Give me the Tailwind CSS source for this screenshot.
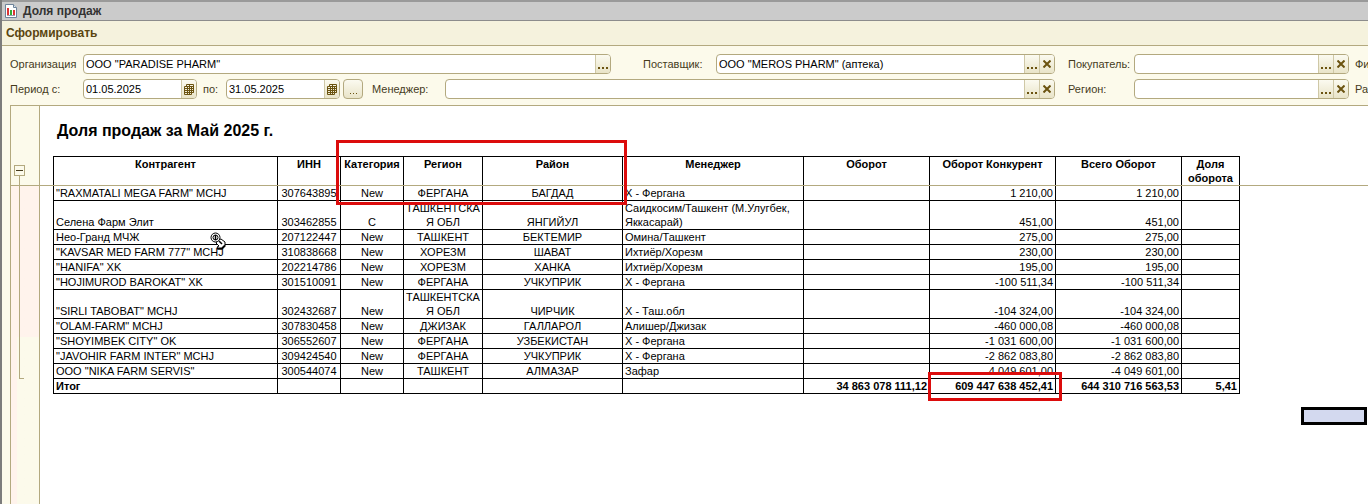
<!DOCTYPE html>
<html lang="ru">
<head>
<meta charset="utf-8">
<title>Доля продаж</title>
<script src="https://cdn.jsdelivr.net/npm/@tailwindcss/browser@4"></script>
</head>
<body class="h-screen overflow-hidden bg-[#fcfaeb] font-['Liberation_Sans',Arial,sans-serif] text-[11px] text-black">
<div class="flex h-full flex-col border-l-2 border-[#7c7c7c]">
  <header class="flex h-[21px] shrink-0 items-center gap-[6px] border-t-2 border-b border-t-[#9a9a9a] border-b-[#8c8c8c] bg-[#cbcbcb] pl-[3px]">
    <svg class="h-[14px] w-[12px]" viewBox="0 0 12 14"><path d="M.5.5h8l3 3v10H.5z" fill="#fff" stroke="#6d8299"/><path d="M8.500 .5v3h3" fill="#dce6ee" stroke="#6d8299"/><path d="M2 4h2v7H2z" fill="#d33"/><path d="M5 6h2v5H5z" fill="#3a3"/><path d="M8 6h2v5H8z" fill="#d33"/><path d="M2 11.500h8" stroke="#99a"/></svg>
    <h1 class="text-[12px] font-bold text-[#333]">Доля продаж</h1>
  </header>
  <nav class="flex h-[25px] shrink-0 items-center border-b border-[#b3a97f] bg-[#f5f2dd] pl-1">
    <button class="text-[12px] font-bold text-[#5a4510]">Сформировать</button>
  </nav>

  <form class="flex shrink-0 flex-col gap-[5px] overflow-hidden pt-[8px] pb-[6px] pl-2 whitespace-nowrap text-[#453a1c]">
    <div class="flex h-5 items-center">
      <label for="org" class="w-[73px] shrink-0">Организация</label>
      <div class="flex h-5 w-[528px] shrink-0 overflow-hidden rounded border border-[#b3a97f] bg-white">
        <input id="org" class="min-w-0 flex-1 pl-[2px] text-[11px] text-black outline-none" value='ООО "PARADISE PHARM"'>
        <button type="button" aria-label="Выбрать" class="flex w-[15px] items-end justify-center border-l border-[#cfc8a6] bg-linear-to-b from-[#fbfaf0] to-[#e9e4c8] pb-[4px]"><svg class="h-[2px] w-[10px]" viewBox="0 0 10 2" fill="#6b5310"><path d="M0 0h2v2H0zM4 0h2v2H4zM8 0h2v2H8z"/></svg></button>
      </div>
      <label for="sup" class="ml-8 w-[73px] shrink-0">Поставщик:</label>
      <div class="flex h-5 w-[339px] shrink-0 overflow-hidden rounded border border-[#b3a97f] bg-white">
        <input id="sup" class="min-w-0 flex-1 pl-[2px] text-[11px] text-black outline-none" value='ООО "MEROS PHARM" (аптека)'>
        <button type="button" aria-label="Выбрать" class="flex w-[15px] items-end justify-center border-l border-[#cfc8a6] bg-linear-to-b from-[#fbfaf0] to-[#e9e4c8] pb-[4px]"><svg class="h-[2px] w-[10px]" viewBox="0 0 10 2" fill="#6b5310"><path d="M0 0h2v2H0zM4 0h2v2H4zM8 0h2v2H8z"/></svg></button>
        <button type="button" aria-label="Очистить" class="flex w-[15px] items-center justify-center border-l border-[#cfc8a6] bg-linear-to-b from-[#fbfaf0] to-[#e9e4c8]"><svg class="size-[8px]" viewBox="0 0 8 8" stroke="#6b5310" stroke-width="2"><path d="M.5.5l7 7M7.500.5l-7 7"/></svg></button>
      </div>
      <label for="buy" class="ml-[13px] w-[66px] shrink-0">Покупатель:</label>
      <div class="flex h-5 w-[215px] shrink-0 overflow-hidden rounded border border-[#b3a97f] bg-white">
        <input id="buy" class="min-w-0 flex-1 pl-[2px] text-[11px] text-black outline-none">
        <button type="button" aria-label="Выбрать" class="flex w-[15px] items-end justify-center border-l border-[#cfc8a6] bg-linear-to-b from-[#fbfaf0] to-[#e9e4c8] pb-[4px]"><svg class="h-[2px] w-[10px]" viewBox="0 0 10 2" fill="#6b5310"><path d="M0 0h2v2H0zM4 0h2v2H4zM8 0h2v2H8z"/></svg></button>
        <button type="button" aria-label="Очистить" class="flex w-[15px] items-center justify-center border-l border-[#cfc8a6] bg-linear-to-b from-[#fbfaf0] to-[#e9e4c8]"><svg class="size-[8px]" viewBox="0 0 8 8" stroke="#6b5310" stroke-width="2"><path d="M.5.5l7 7M7.500.5l-7 7"/></svg></button>
      </div>
      <span class="ml-[6px] shrink-0">Фи</span>
    </div>
    <div class="flex h-5 items-center">
      <label for="from" class="w-[73px] shrink-0">Период с:</label>
      <div class="flex h-5 w-[114px] shrink-0 overflow-hidden rounded border border-[#b3a97f] bg-white">
        <input id="from" class="min-w-0 flex-1 pl-[2px] text-[11px] text-black outline-none" value="01.05.2025">
        <button type="button" aria-label="Календарь" class="flex w-[15px] items-center justify-center border-l border-[#cfc8a6] bg-linear-to-b from-[#fbfaf0] to-[#e9e4c8]"><svg class="h-[11px] w-[10px]" viewBox="0 0 10 11" fill="none" stroke="#6b5310"><path d="M2.500 2V.5h7v8H8M.5 2.500h7v8h-7zM.5 4.500h9M.5 6.500h9M.5 8.500h9M3.500 2v8.500M5.500 .5v10M2.500 2.500h7"/></svg></button>
      </div>
      <label for="to" class="ml-[6px] w-[23px] shrink-0">по:</label>
      <div class="flex h-5 w-[114px] shrink-0 overflow-hidden rounded border border-[#b3a97f] bg-white">
        <input id="to" class="min-w-0 flex-1 pl-[2px] text-[11px] text-black outline-none" value="31.05.2025">
        <button type="button" aria-label="Календарь" class="flex w-[15px] items-center justify-center border-l border-[#cfc8a6] bg-linear-to-b from-[#fbfaf0] to-[#e9e4c8]"><svg class="h-[11px] w-[10px]" viewBox="0 0 10 11" fill="none" stroke="#6b5310"><path d="M2.500 2V.5h7v8H8M.5 2.500h7v8h-7zM.5 4.500h9M.5 6.500h9M.5 8.500h9M3.500 2v8.500M5.500 .5v10M2.500 2.500h7"/></svg></button>
      </div>
      <button type="button" aria-label="Выбрать период" class="ml-[3px] flex h-5 w-5 shrink-0 items-end justify-center rounded border border-[#b3a97f] bg-linear-to-b from-[#fbfaf0] to-[#e9e4c8] pb-[4px]"><svg class="h-px w-[7px]" viewBox="0 0 7 1" fill="#6b5310"><path d="M0 0h1v1H0zM3 0h1v1H3zM6 0h1v1H6z"/></svg></button>
      <label for="mgr" class="ml-[9px] w-[73px] shrink-0">Менеджер:</label>
      <div class="flex h-5 w-[610px] shrink-0 overflow-hidden rounded border border-[#b3a97f] bg-white">
        <input id="mgr" class="min-w-0 flex-1 pl-[2px] text-[11px] text-black outline-none">
        <button type="button" aria-label="Выбрать" class="flex w-[15px] items-end justify-center border-l border-[#cfc8a6] bg-linear-to-b from-[#fbfaf0] to-[#e9e4c8] pb-[4px]"><svg class="h-[2px] w-[10px]" viewBox="0 0 10 2" fill="#6b5310"><path d="M0 0h2v2H0zM4 0h2v2H4zM8 0h2v2H8z"/></svg></button>
        <button type="button" aria-label="Очистить" class="flex w-[15px] items-center justify-center border-l border-[#cfc8a6] bg-linear-to-b from-[#fbfaf0] to-[#e9e4c8]"><svg class="size-[8px]" viewBox="0 0 8 8" stroke="#6b5310" stroke-width="2"><path d="M.5.5l7 7M7.500.5l-7 7"/></svg></button>
      </div>
      <label for="reg" class="ml-[13px] w-[66px] shrink-0">Регион:</label>
      <div class="flex h-5 w-[215px] shrink-0 overflow-hidden rounded border border-[#b3a97f] bg-white">
        <input id="reg" class="min-w-0 flex-1 pl-[2px] text-[11px] text-black outline-none">
        <button type="button" aria-label="Выбрать" class="flex w-[15px] items-end justify-center border-l border-[#cfc8a6] bg-linear-to-b from-[#fbfaf0] to-[#e9e4c8] pb-[4px]"><svg class="h-[2px] w-[10px]" viewBox="0 0 10 2" fill="#6b5310"><path d="M0 0h2v2H0zM4 0h2v2H4zM8 0h2v2H8z"/></svg></button>
        <button type="button" aria-label="Очистить" class="flex w-[15px] items-center justify-center border-l border-[#cfc8a6] bg-linear-to-b from-[#fbfaf0] to-[#e9e4c8]"><svg class="size-[8px]" viewBox="0 0 8 8" stroke="#6b5310" stroke-width="2"><path d="M.5.5l7 7M7.500.5l-7 7"/></svg></button>
      </div>
      <span class="ml-[6px] shrink-0">Ра</span>
    </div>
  </form>

  <main class="relative ml-2 flex min-h-0 flex-1 overflow-hidden border-t border-l border-[#b3a97f] bg-white">
    <aside class="flex w-[29px] shrink-0 flex-col border-r border-[#b3a97f] bg-[#fcfaeb]">
      <div class="flex h-[79px] shrink-0 flex-col items-start justify-end pl-[3px]">
        <button type="button" aria-label="Свернуть группу" class="flex size-[11px] items-center justify-center border border-[#b3a97f] bg-[#fcfaeb]"><span class="h-px w-[7px] bg-[#453a1c]"></span></button>
        <span class="ml-[5px] h-[9px] w-px bg-[#b3a97f]"></span>
      </div>
      <div class="flex flex-1 bg-linear-to-r from-[#fff3ec] from-[6px] to-[#fcfaeb] to-[6px]">
        <div class="flex h-[194px] flex-1 bg-linear-to-b from-[#fff3ec] from-[152px] to-transparent to-[152px] pl-2">
          <span class="h-full w-[5px] border-b border-l border-[#b3a97f]"></span>
        </div>
      </div>
    </aside>
    <section class="pl-[13px]">
      <h2 class="flex h-[50px] items-center pl-1 text-[16px] font-bold">Доля продаж за Май 2025 г.</h2>
      <table class="w-[1187px] table-fixed border-separate border-spacing-0 border-t border-l border-black leading-[14px] [&_td]:border-r [&_td]:border-b [&_td]:border-black [&_td]:px-[2px] [&_td]:py-0 [&_td]:align-bottom [&_th]:border-r [&_th]:border-b [&_th]:border-black [&_th]:p-0 [&_th]:align-top">
        <colgroup><col class="w-[224px]"><col class="w-[63px]"><col class="w-[63px]"><col class="w-[79px]"><col class="w-[140px]"><col class="w-[181px]"><col class="w-[126px]"><col class="w-[126px]"><col class="w-[126px]"><col class="w-[58px]"></colgroup>
        <thead><tr><th>Контрагент</th><th>ИНН</th><th>Категория</th><th>Регион</th><th>Район</th><th>Менеджер</th><th>Оборот</th><th>Оборот Конкурент</th><th>Всего Оборот</th><th>Доля оборота</th></tr></thead>
        <tbody id="rows"></tbody>
        <tfoot><tr class="font-bold"><td>Итог</td><td></td><td></td><td></td><td></td><td></td><td class="text-right">34 863 078 111,12</td><td class="text-right">609 447 638 452,41</td><td class="text-right">644 310 716 563,53</td><td class="text-right">5,41</td></tr></tfoot>
      </table>
    </section>
    <!-- frozen header line -->
    <div class="absolute inset-x-0 top-[79px] h-px bg-[#b3a97f]"></div>
    <!-- highlighted areas -->
    <div class="absolute top-[34px] left-[325px] h-[65px] w-[291px] border-[3px] border-[#dc0c0c]"></div>
    <div class="absolute top-[266px] left-[917px] h-[29px] w-[134px] border-[3px] border-[#dc0c0c]"></div>
    <!-- selected cell -->
    <div class="absolute top-[301px] left-[1290px] h-[18px] w-[66px] border-[3px] border-black bg-[#d3d9ef]"></div>
    <!-- pointer -->
    <svg class="absolute top-[126px] left-[199px] h-[18px] w-[16px]" viewBox="0 0 16 18"><path d="M8 8l3-1 4 3v4l-3 3H8l-1-2 2-1-3-3z" fill="#fff" stroke="#000"/><path d="M7 16.500h5l3-3" fill="none" stroke="#000" stroke-width="2"/><circle cx="5.500" cy="5.500" r="4.500" fill="#fff" stroke="#000"/><circle cx="5.500" cy="5.500" r="2.500" fill="none" stroke="#000"/><path d="M5.500 3v5M9 9l3 3" stroke="#000" stroke-width="1.500"/></svg>
  </main>
</div>
<script>
const rows = [
  ['"RAXMATALI MEGA FARM" MCHJ', '307643895', 'New', 'ФЕРГАНА', 'БАГДАД', 'Х - Фергана', '1 210,00'],
  ['Селена Фарм Элит', '303462855', 'С', 'ТАШКЕНТСКА<br>Я ОБЛ', 'ЯНГИЙУЛ', 'Саидкосим/Ташкент (М.Улугбек, Яккасарай)', '451,00'],
  ['Нео-Гранд МЧЖ', '207122447', 'New', 'ТАШКЕНТ', 'БЕКТЕМИР', 'Омина/Ташкент', '275,00'],
  ['"KAVSAR MED FARM 777" MCHJ', '310838668', 'New', 'ХОРЕЗМ', 'ШАВАТ', 'Ихтиёр/Хорезм', '230,00'],
  ['"HANIFA" XK', '202214786', 'New', 'ХОРЕЗМ', 'ХАНКА', 'Ихтиёр/Хорезм', '195,00'],
  ['"HOJIMUROD BAROKAT" XK', '301510091', 'New', 'ФЕРГАНА', 'УЧКУПРИК', 'Х - Фергана', '-100 511,34'],
  ['"SIRLI TABOBAT" MCHJ', '302432687', 'New', 'ТАШКЕНТСКА<br>Я ОБЛ', 'ЧИРЧИК', 'Х - Таш.обл', '-104 324,00'],
  ['"OLAM-FARM" MCHJ', '307830458', 'New', 'ДЖИЗАК', 'ГАЛЛАРОЛ', 'Алишер/Джизак', '-460 000,08'],
  ['"SHOYIMBEK CITY" OK', '306552607', 'New', 'ФЕРГАНА', 'УЗБЕКИСТАН', 'Х - Фергана', '-1 031 600,00'],
  ['"JAVOHIR FARM INTER" MCHJ', '309424540', 'New', 'ФЕРГАНА', 'УЧКУПРИК', 'Х - Фергана', '-2 862 083,80'],
  ['ООО "NIKA FARM SERVIS"', '300544074', 'New', 'ТАШКЕНТ', 'АЛМАЗАР', 'Зафар', '-4 049 601,00'],
];
document.getElementById('rows').innerHTML = rows.map(([n, inn, c, r, d, m, v]) =>
  `<tr><td>${n}</td><td class="text-center">${inn}</td><td class="text-center">${c}</td><td class="text-center">${r}</td><td class="text-center">${d}</td><td>${m}</td><td></td><td class="text-right">${v}</td><td class="text-right">${v}</td><td></td></tr>`).join('');
</script>
</body>
</html>
